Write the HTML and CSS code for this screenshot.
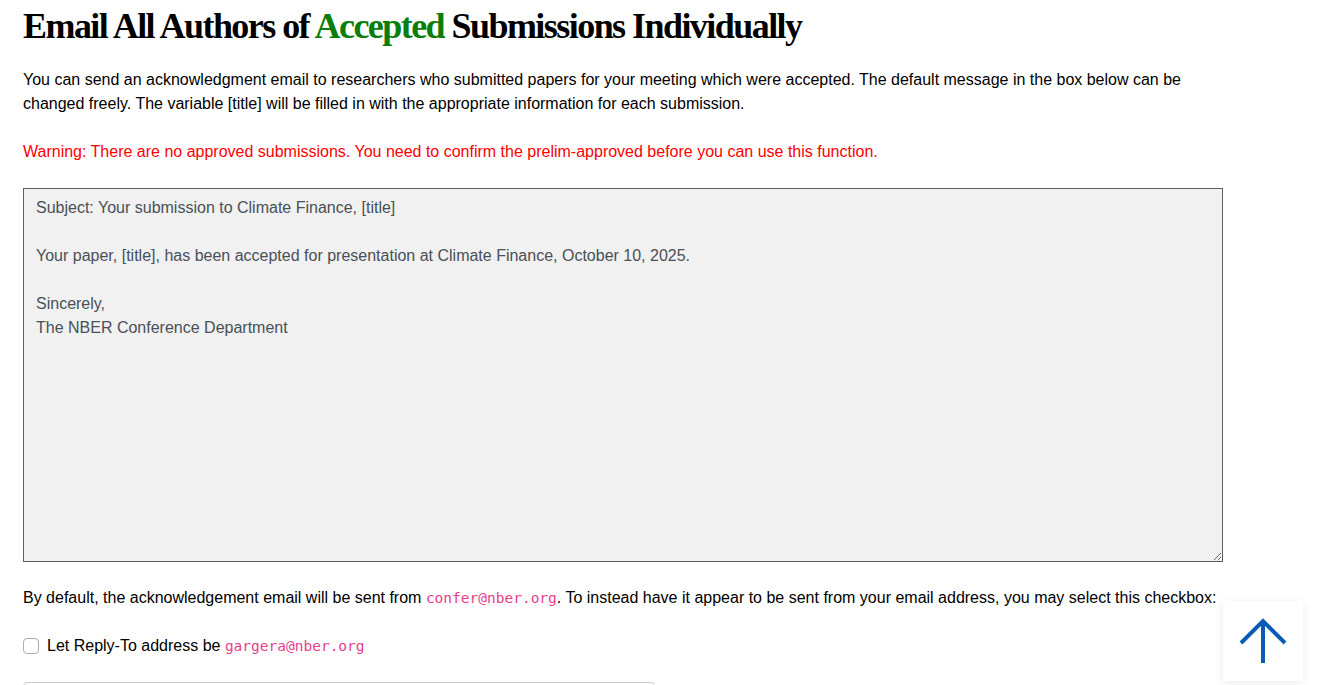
FILE: index.html
```html
<!DOCTYPE html>
<html lang="en">
<head>
<meta charset="utf-8">
<title>Email All Authors of Accepted Submissions Individually</title>
<link rel="stylesheet" href="styles.css">
</head>
<body>
<main class="page">
  <h1 class="title">Email All Authors of <span class="accepted">Accepted</span> Submissions Individually</h1>
  <p class="intro">You can send an acknowledgment email to researchers who submitted papers for your meeting which were accepted. The default message in the box below can be changed freely. The variable [title] will be filled in with the appropriate information for each submission.</p>
  <p class="warning">Warning: There are no approved submissions. You need to confirm the prelim-approved before you can use this function.</p>
  <textarea class="message" rows="15">Subject: Your submission to Climate Finance, [title]

Your paper, [title], has been accepted for presentation at Climate Finance, October 10, 2025.

Sincerely,
The NBER Conference Department</textarea>
  <p class="sender">By default, the acknowledgement email will be sent from <code>confer@nber.org</code>. To instead have it appear to be sent from your email address, you may select this checkbox:</p>
  <label class="reply"><input type="checkbox" class="check"> <span>Let Reply-To address be <code>gargera@nber.org</code></span></label>
  <div class="next-box"></div>
</main>
<a class="to-top" href="#" aria-label="Back to top">
  <svg width="48" height="48" viewBox="0 0 48 48" fill="none" stroke="#0b5cb5" stroke-width="4">
    <path d="M24 46V4"/>
    <path d="M2 26L24 4L46 26"/>
  </svg>
</a>
</body>
</html>
```
FILE: styles.css
```css
html, body {
  margin: 0;
  padding: 0;
  background: #fff;
}
body {
  font-family: "Liberation Sans", Arial, sans-serif;
  font-size: 16px;
  line-height: 24px;
  color: #000;
  overflow: hidden;
}
.page {
  padding: 6px 23px 0;
  width: 1200px;
}
.title {
  margin: 0 0 22px;
  font-family: "Liberation Serif", "Times New Roman", serif;
  font-weight: 700;
  font-size: 36px;
  line-height: 40px;
  letter-spacing: -1.55px;
  color: #000;
}
.accepted {
  color: #0a7d0a;
}
.intro {
  margin: 0 0 24px;
}
.warning {
  margin: 0 0 24px;
  color: #f00;
}
.message {
  display: block;
  box-sizing: border-box;
  width: 1200px;
  height: 374px;
  margin: 0 0 24px;
  padding: 7px 12px 5px;
  border: 1px solid #5a5d63;
  border-radius: 0;
  background: #f0f1f0;
  color: #495057;
  font-family: "Liberation Sans", Arial, sans-serif;
  font-size: 16px;
  line-height: 24px;
  resize: vertical;
}
.sender {
  margin: 0 0 24px;
  white-space: nowrap;
}
code {
  font-family: "DejaVu Sans Mono", monospace;
  font-size: 14.5px;
  color: #e83e8c;
}
.reply {
  display: flex;
  align-items: center;
  gap: 8px;
  height: 24px;
  margin-bottom: 24px;
}
.check {
  appearance: none;
  -webkit-appearance: none;
  width: 16px;
  height: 16px;
  margin: 0;
  border: 1px solid #a7adb4;
  border-radius: 4px;
  background: #fff;
}
.next-box {
  width: 630px;
  height: 30px;
  border: 1px solid #ccc;
  border-radius: 4px;
}
.to-top {
  position: fixed;
  right: 23px;
  bottom: 4px;
  width: 80px;
  height: 80px;
  display: flex;
  align-items: center;
  justify-content: center;
  background: #fff;
  box-shadow: 0 2px 10px rgba(0, 0, 0, 0.08);
}
```
